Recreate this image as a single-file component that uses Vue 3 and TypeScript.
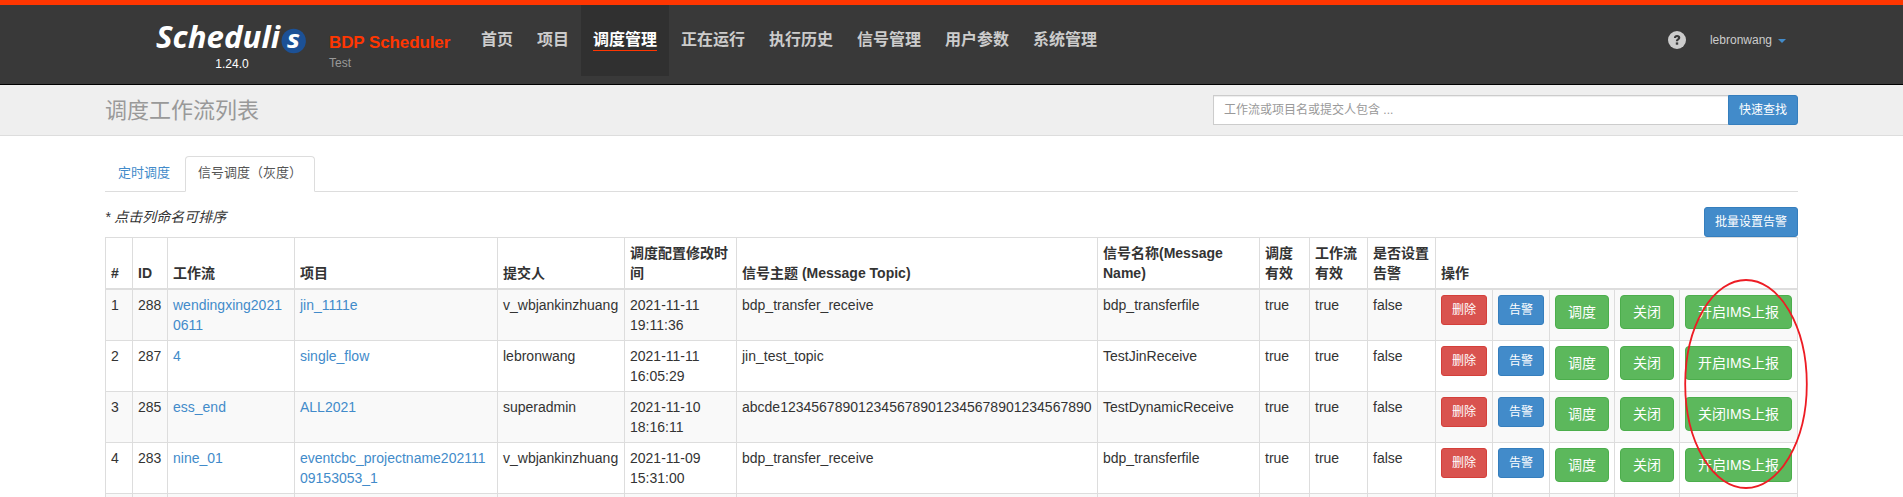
<script setup lang="ts">
interface Flow {
  id: number
  flow: string
  project: string
  user: string
  date: string
  time: string
  topic: string
  name: string
  ims: string
}

const navItems: string[] = ['首页', '项目', '调度管理', '正在运行', '执行历史', '信号管理', '用户参数', '系统管理']
const activeNav = '调度管理'

const columns: number[] = [28, 35, 127, 203, 127, 112, 361, 162, 50, 58, 68, 57, 57, 65, 65, 118]

const headings: string[] = [
  '#',
  'ID',
  '工作流',
  '项目',
  '提交人',
  '调度配置修改时间',
  '信号主题 (Message Topic)',
  '信号名称(Message Name)',
  '调度有效',
  '工作流有效',
  '是否设置告警',
]

const rows: Flow[] = [
  { id: 288, flow: 'wendingxing20210611', project: 'jin_1111e', user: 'v_wbjankinzhuang', date: '2021-11-11', time: '19:11:36', topic: 'bdp_transfer_receive', name: 'bdp_transferfile', ims: '开启IMS上报' },
  { id: 287, flow: '4', project: 'single_flow', user: 'lebronwang', date: '2021-11-11', time: '16:05:29', topic: 'jin_test_topic', name: 'TestJinReceive', ims: '开启IMS上报' },
  { id: 285, flow: 'ess_end', project: 'ALL2021', user: 'superadmin', date: '2021-11-10', time: '18:16:11', topic: 'abcde1234567890123456789012345678901234567890', name: 'TestDynamicReceive', ims: '关闭IMS上报' },
  { id: 283, flow: 'nine_01', project: 'eventcbc_projectname20211109153053_1', user: 'v_wbjankinzhuang', date: '2021-11-09', time: '15:31:00', topic: 'bdp_transfer_receive', name: 'bdp_transferfile', ims: '开启IMS上报' },
]
</script>

<template>
  <div class="page">
    <header class="navbar">
      <div class="logo">
        <svg width="154" height="42" viewBox="0 -8 154 42">
          <text class="logo-word" x="1" y="28" textLength="124" lengthAdjust="spacingAndGlyphs">Scheduli</text>
          <circle cx="138.7" cy="21" r="12.2" fill="#1c5196" />
          <text class="logo-s" x="132" y="27.5" textLength="13" lengthAdjust="spacingAndGlyphs">s</text>
        </svg>
        <span class="version">1.24.0</span>
      </div>
      <div class="brand">
        <div class="brand-name">BDP Scheduler</div>
        <div class="brand-env">Test</div>
      </div>
      <nav class="menu">
        <a v-for="item in navItems" :key="item" class="menu-item" :class="{ active: item === activeNav }">
          <span>{{ item }}</span>
        </a>
      </nav>
      <div class="account">
        <svg width="18" height="18" viewBox="0 0 18 18">
          <circle cx="9" cy="9" r="9" fill="#ccc" />
          <path d="M5.9 7.1C5.9 5 7.2 4 9.1 4s3.2 1 3.2 2.7c0 2-2.3 2-2.3 3.6H7.9c0-2.4 2.1-2.4 2.1-3.5 0-.6-.4-.9-1-.9s-.9.4-.9 1.2z" fill="#393939" />
          <rect x="7.8" y="11.4" width="2.4" height="2.3" fill="#393939" />
        </svg>
        <span class="user">lebronwang</span>
        <span class="caret"></span>
      </div>
    </header>

    <div class="title-bar">
      <h1>调度工作流列表</h1>
      <div class="search">
        <input type="text" placeholder="工作流或项目名或提交人包含 ..." />
        <button class="btn small primary search-btn">快速查找</button>
      </div>
    </div>

    <main class="content">
      <ul class="tabs">
        <li>定时调度</li>
        <li class="current">信号调度（灰度）</li>
      </ul>
      <div class="toolbar">
        <i>* 点击列命名可排序</i>
        <button class="btn small primary">批量设置告警</button>
      </div>
      <div class="table-wrap">
        <table>
          <colgroup>
            <col v-for="(w, i) in columns" :key="i" :style="{ width: w + 'px' }" />
          </colgroup>
          <thead>
            <tr>
              <th v-for="h in headings" :key="h">{{ h }}</th>
              <th colspan="5">操作</th>
            </tr>
          </thead>
          <tbody>
            <tr v-for="(row, i) in rows" :key="row.id">
              <td>{{ i + 1 }}</td>
              <td>{{ row.id }}</td>
              <td class="flow"><a>{{ row.flow }}</a></td>
              <td><a>{{ row.project }}</a></td>
              <td class="nowrap">{{ row.user }}</td>
              <td>{{ row.date }}<br />{{ row.time }}</td>
              <td class="nowrap">{{ row.topic }}</td>
              <td>{{ row.name }}</td>
              <td>true</td>
              <td>true</td>
              <td>false</td>
              <td><button class="btn small danger">删除</button></td>
              <td><button class="btn small primary">告警</button></td>
              <td><button class="btn success">调度</button></td>
              <td><button class="btn success">关闭</button></td>
              <td><button class="btn success">{{ row.ims }}</button></td>
            </tr>
            <tr>
              <td v-for="(_, i) in columns" :key="i"></td>
            </tr>
          </tbody>
        </table>
        <svg class="marker" width="126" height="212" viewBox="0 0 126 212">
          <ellipse cx="63" cy="106" rx="60.8" ry="104" fill="none" stroke="#ed1c24" stroke-width="1.8" />
        </svg>
      </div>
    </main>
  </div>
</template>

<style>
body {
  margin: 0;
  overflow: hidden;
}
</style>

<style scoped>
.page {
  width: 100%;
  height: 497px;
  overflow: hidden;
  background: #fff;
  color: #333;
  font: 14px/20px 'Liberation Sans', 'Noto Sans CJK SC', sans-serif;
}
.page * {
  box-sizing: border-box;
}
.navbar {
  display: flex;
  height: 85px;
  padding: 0 105px 0 155px;
  background: #393939;
  border-top: 5px solid #ff3601;
  border-bottom: 1px solid #000;
}
.logo {
  width: 154px;
  padding-top: 7px;
  display: flex;
  flex-direction: column;
  align-items: center;
}
.logo svg {
  flex: none;
  overflow: visible;
}
.logo-word,
.logo-s {
  font-family: 'Open Sans', 'Noto Sans', sans-serif;
  font-style: italic;
  font-weight: 700;
  fill: #fff;
}
.logo-word {
  font-size: 30px;
}
.logo-s {
  font-size: 25px;
}
.version {
  color: #fff;
  font-size: 12px;
  line-height: 14px;
  margin-top: 3px;
}
.brand {
  width: 129px;
  margin-left: 20px;
  padding-top: 28px;
  white-space: nowrap;
}
.brand-name {
  color: #ff3601;
  font-size: 17px;
  letter-spacing: -0.1px;
  line-height: 20px;
  font-weight: 700;
}
.brand-env {
  margin-top: 3px;
  color: #999;
  font-size: 12px;
  line-height: 14px;
}
.menu {
  display: flex;
  margin-left: 11px;
}
.menu-item {
  height: 71px;
  padding: 24px 12px 0;
  color: #ccc;
  font-size: 16px;
  font-weight: 700;
}
.menu-item span {
  display: block;
  height: 22px;
  line-height: 22px;
}
.menu-item.active {
  background: #303030;
  color: #fff;
}
.menu-item.active span {
  border-bottom: 1px solid #ff3601;
}
.account {
  display: flex;
  align-items: center;
  height: 70px;
  margin-left: auto;
  padding-right: 12px;
}
.user {
  margin-left: 24px;
  color: #ccc;
  font-size: 12px;
}
.caret {
  margin: 2px 0 0 6px;
  border: 4px solid transparent;
  border-top-color: #428bca;
  border-bottom: 0;
}
.title-bar {
  display: flex;
  justify-content: space-between;
  height: 51px;
  padding: 10px 105px 0;
  background: #efefef;
  border-bottom: 1px solid #ddd;
}
h1 {
  margin: 0;
  color: #999;
  font-size: 22px;
  font-weight: 400;
  line-height: 31px;
}
.search {
  display: flex;
  width: 585px;
  height: 30px;
}
input {
  flex: 1;
  height: 30px;
  padding: 5px 10px;
  border: 1px solid #ccc;
  border-right: 0;
  border-radius: 0;
  box-shadow: inset 0 1px 1px rgba(0, 0, 0, 0.075);
  background: #fff;
  font: 12px/18px 'Liberation Sans', 'Noto Sans CJK SC', sans-serif;
}
input::placeholder {
  color: #999;
}
.btn {
  display: block;
  height: 34px;
  padding: 0 12px;
  border: 1px solid;
  border-radius: 4px;
  color: #fff;
  font: 14px/20px 'Liberation Sans', 'Noto Sans CJK SC', sans-serif;
  white-space: nowrap;
}
.btn.small {
  height: 30px;
  padding: 0 10px;
  border-radius: 3px;
  font-size: 12px;
  line-height: 18px;
}
.primary {
  background: #428bca;
  border-color: #357ebd;
}
.danger {
  background: #d9534f;
  border-color: #d43f3a;
}
.success {
  background: #5cb85c;
  border-color: #4cae4c;
}
.btn.search-btn {
  border-radius: 0 3px 3px 0;
}
.content {
  padding: 20px 105px 0;
}
.tabs {
  display: flex;
  height: 36px;
  margin: 0;
  padding: 0;
  list-style: none;
  border-bottom: 1px solid #ddd;
  font-size: 13px;
}
.tabs li {
  height: 36px;
  margin-right: 2px;
  padding: 6px 12px 0;
  border: 1px solid transparent;
  border-radius: 4px 4px 0 0;
  color: #428bca;
}
.tabs .current {
  margin-right: 0;
  background: #fff;
  border-color: #ddd #ddd #fff;
  color: #555;
}
.toolbar {
  display: flex;
  justify-content: space-between;
  height: 45px;
  padding-top: 15px;
}
.table-wrap {
  position: relative;
}
table {
  width: 1693px;
  table-layout: fixed;
  border-collapse: separate;
  border-spacing: 0;
}
th,
td {
  padding: 5px 4px 5px 5px;
  border-right: 1px solid #ddd;
  border-bottom: 1px solid #ddd;
  text-align: left;
  vertical-align: top;
  overflow-wrap: anywhere;
}
th {
  height: 53px;
  border-top: 1px solid #ddd;
  border-bottom-width: 2px;
  vertical-align: bottom;
}
td {
  height: 51px;
}
th:first-child,
td:first-child {
  border-left: 1px solid #ddd;
}
tbody tr:nth-child(odd) td {
  background: #f9f9f9;
}
td a {
  color: #428bca;
}
td.flow {
  padding-right: 10px;
}
.nowrap {
  white-space: nowrap;
}
.marker {
  position: absolute;
  left: 1578px;
  top: 41px;
  pointer-events: none;
}
</style>
